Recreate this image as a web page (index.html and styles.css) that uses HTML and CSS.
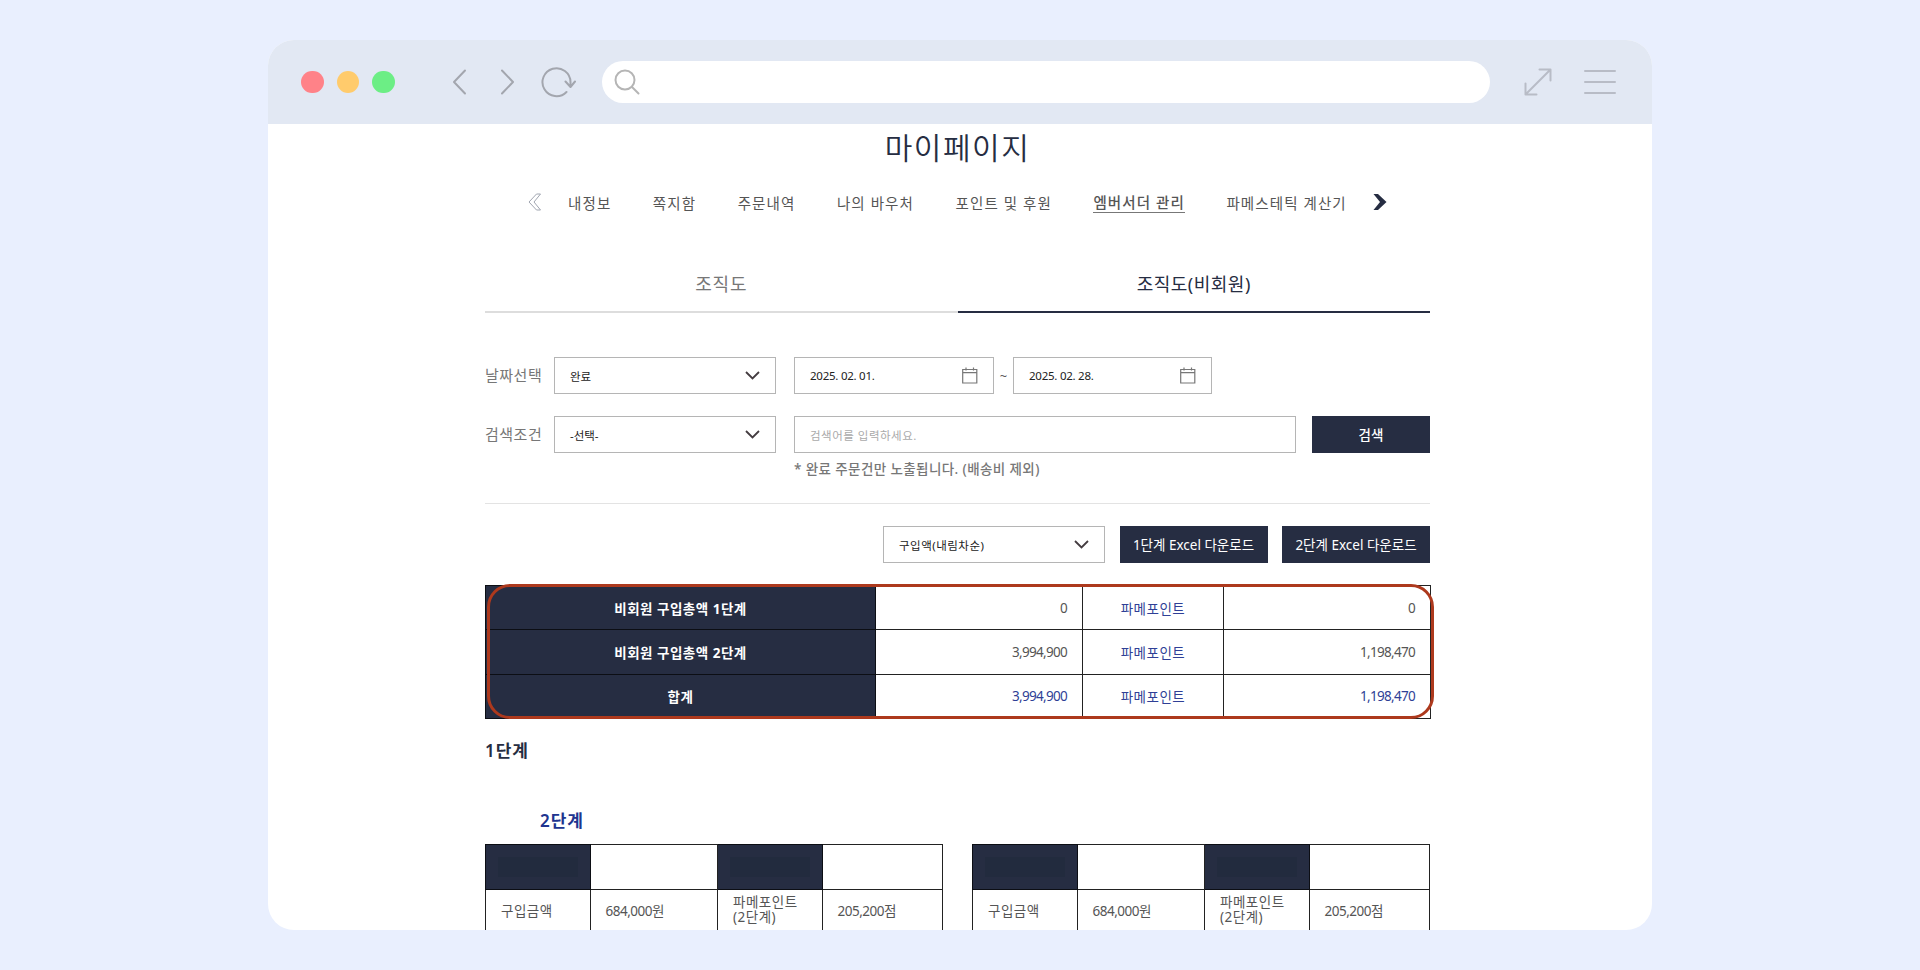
FILE: index.html
```html
<!DOCTYPE html>
<html lang="ko">
<head>
    <meta charset="UTF-8">
    <meta name="viewport" content="width=device-width, initial-scale=1.0">
    <title>마이페이지</title>
    <link rel="stylesheet" href="styles.css">
</head>
<body>
    <div class="browser">
        <header class="toolbar">
            <span class="dot red"></span>
            <span class="dot yellow"></span>
            <span class="dot green"></span>
            <svg class="icon-back" width="15" height="26" viewBox="0 0 15 26"><path d="M13 1.5 2 13l11 11.5"/></svg>
            <svg class="icon-next" width="15" height="26" viewBox="0 0 15 26"><path d="M2 1.5 13 13 2 24.5"/></svg>
            <svg class="icon-reload" width="36" height="32" viewBox="0 0 36 32"><path d="M25.5 26A14 14 0 1 1 29.5 16v4M24.5 15.5l5 5.5 4.5-5.5"/></svg>
            <div class="address">
                <svg width="26" height="26" viewBox="0 0 26 26"><circle cx="11" cy="11" r="9.5"/><path d="m18 18 6.5 6.5"/></svg>
            </div>
            <svg class="icon-expand" width="28" height="28" viewBox="0 0 28 28"><path d="M2 26 26 2M15.5 1.5h11v11M1.5 15.5v11h11"/></svg>
            <svg class="icon-menu" width="32" height="26" viewBox="0 0 32 26"><path d="M1 2h30M1 13h30M1 24h30"/></svg>
        </header>

        <main class="page">
            <h1>마이페이지</h1>
            <nav>
                <svg class="nav-prev" width="14" height="18" viewBox="0 0 14 18"><path d="M1 9 8.5 1h4L6 9l6.5 8h-4z"/></svg>
                <a>내정보</a>
                <a>쪽지함</a>
                <a>주문내역</a>
                <a>나의 바우처</a>
                <a>포인트 및 후원</a>
                <a class="active">엠버서더 관리</a>
                <a>파메스테틱 계산기</a>
                <svg class="nav-next" width="14" height="18" viewBox="0 0 14 18"><path d="M13.5 9 5 1H.5L7 9l-6.500 8H5z"/></svg>
            </nav>

            <div class="tabs">
                <a>조직도</a>
                <a class="active">조직도(비회원)</a>
            </div>

            <div class="row">
                <span class="label">날짜선택</span>
                <div class="box select"><span>완료</span><svg width="15" height="9" viewBox="0 0 15 9"><path d="m1 1 6.5 6.500L14 1"/></svg></div>
                <div class="box date"><span>2025. 02. 01.</span><svg width="16" height="17" viewBox="0 0 16 17"><path d="M.7 2.5h14.1V16H.7zM.7 5.6h14.1M4 .5v3M11.5.5v3"/></svg></div>
                <span class="tilde">~</span>
                <div class="box date second"><span>2025. 02. 28.</span><svg width="16" height="17" viewBox="0 0 16 17"><path d="M.7 2.5h14.1V16H.7zM.7 5.6h14.1M4 .5v3M11.5.5v3"/></svg></div>
            </div>
            <div class="row">
                <span class="label">검색조건</span>
                <div class="box select"><span>-선택-</span><svg width="15" height="9" viewBox="0 0 15 9"><path d="m1 1 6.5 6.500L14 1"/></svg></div>
                <div class="box keyword"><span>검색어를 입력하세요.</span></div>
                <button class="btn search">검색</button>
            </div>
            <p class="note">* 완료 주문건만 노출됩니다. (배송비 제외)</p>

            <div class="row actions">
                <div class="box select sort"><span>구입액(내림차순)</span><svg width="15" height="9" viewBox="0 0 15 9"><path d="m1 1 6.5 6.500L14 1"/></svg></div>
                <button class="btn">1단계 Excel 다운로드</button>
                <button class="btn">2단계 Excel 다운로드</button>
            </div>

            <div class="summary">
                <table>
                    <colgroup><col class="c1"><col class="c2"><col class="c3"><col class="c4"></colgroup>
                    <tr>
                        <th>비회원 구입총액 1단계</th>
                        <td class="num">0</td>
                        <td class="point">파메포인트</td>
                        <td class="num">0</td>
                    </tr>
                    <tr>
                        <th>비회원 구입총액 2단계</th>
                        <td class="num">3,994,900</td>
                        <td class="point">파메포인트</td>
                        <td class="num">1,198,470</td>
                    </tr>
                    <tr>
                        <th>합계</th>
                        <td class="num blue">3,994,900</td>
                        <td class="point">파메포인트</td>
                        <td class="num blue">1,198,470</td>
                    </tr>
                </table>
                <!-- highlight over the totals -->
                <div class="highlight"></div>
            </div>

            <h2>1단계</h2>
            <h3>2단계</h3>

            <div class="members">
                <table>
                    <colgroup><col class="m1"><col class="m2"><col class="m3"><col class="m4"></colgroup>
                    <tr>
                        <th><span class="mask"></span></th>
                        <td></td>
                        <th><span class="mask"></span></th>
                        <td></td>
                    </tr>
                    <tr>
                        <td class="name">구입금액</td>
                        <td>684,000원</td>
                        <td class="name two">파메포인트<br>(2단계)</td>
                        <td>205,200점</td>
                    </tr>
                </table>
                <table>
                    <colgroup><col class="m1"><col class="m2"><col class="m3"><col class="m4"></colgroup>
                    <tr>
                        <th><span class="mask"></span></th>
                        <td></td>
                        <th><span class="mask"></span></th>
                        <td></td>
                    </tr>
                    <tr>
                        <td class="name">구입금액</td>
                        <td>684,000원</td>
                        <td class="name two">파메포인트<br>(2단계)</td>
                        <td>205,200점</td>
                    </tr>
                </table>
            </div>
        </main>
    </div>
</body>
</html>
```
FILE: styles.css
```css
/* Global Styles */
* {
    box-sizing: border-box;
}
body {
    font-family: "Noto Sans", "Noto Sans CJK KR", sans-serif;
    background-color: #e9effe;
    color: #555;
    margin: 0;
    padding: 40px 268px;
    height: 970px;
    overflow: hidden;
}
svg {
    fill: none;
    flex: none;
}
.browser {
    width: 1384px;
    height: 890px;
    background-color: #fff;
    border-radius: 26px;
    overflow: hidden;
}

/* Browser bar */
.toolbar {
    display: flex;
    align-items: center;
    height: 84px;
    padding: 0 36px 0 33px;
    background-color: #e2e8f3;
}
.toolbar svg {
    stroke: #a3a6ae;
    stroke-width: 2;
    stroke-linecap: round;
    stroke-linejoin: round;
}
.dot {
    width: 22.5px;
    height: 22.5px;
    border-radius: 50%;
    margin-right: 13.2px;
}
.red {
    background-color: #ff8288;
}
.yellow {
    background-color: #ffcb6c;
}
.green {
    background-color: #6cee85;
}
.icon-back {
    margin-left: 44px;
}
.icon-next {
    margin-left: 33px;
}
.icon-reload {
    margin-left: 25.5px;
}
.address {
    display: flex;
    align-items: center;
    width: 888px;
    height: 42px;
    margin-left: 25px;
    padding-left: 12px;
    background-color: #fff;
    border-radius: 21px;
}
.toolbar .address svg {
    stroke: #b5b5b5;
}
.toolbar .icon-expand {
    margin-left: 34px;
    stroke: #b8bcc6;
}
.toolbar .icon-menu {
    margin-left: auto;
    stroke: #b8bcc6;
}

/* Page */
.page {
    width: 945px;
    margin-left: 217px;
}
h1 {
    height: 46px;
    line-height: 47px;
    margin: 0;
    font-size: 30px;
    font-weight: 350;
    letter-spacing: 1.5px;
    text-align: center;
    color: #262d42;
}
nav {
    display: flex;
    align-items: center;
    height: 64px;
    padding-left: 43px;
    font-size: 14.5px;
    letter-spacing: 1.1px;
    white-space: nowrap;
}
nav a {
    margin-right: 41.5px;
}
nav .active {
    font-weight: 500;
    line-height: 20px;
    border-bottom: 1px solid #777;
}
.nav-prev {
    margin-right: 26px;
    stroke: #a0a5b0;
}
.nav-next {
    margin-left: -15px;
    fill: #262d42;
}
.tabs {
    display: flex;
    height: 64px;
    margin-top: 15px;
    font-size: 18px;
    letter-spacing: 0.7px;
    line-height: 70px;
    text-align: center;
}
.tabs a {
    flex: 1;
    color: #777;
    border-bottom: 2px solid #ddd;
}
.tabs .active {
    color: #262d42;
    letter-spacing: 0.5px;
    border-color: #262d42;
}
.row {
    display: flex;
    align-items: center;
    height: 37px;
    margin-top: 22px;
}
.tabs + .row {
    margin-top: 44px;
}
.label {
    width: 69px;
    padding-bottom: 2px;
    font-size: 15px;
    letter-spacing: 0.5px;
    color: #777;
}
.box {
    display: flex;
    align-items: center;
    justify-content: space-between;
    height: 37px;
    padding: 0 15px;
    border: 1px solid #b5b5b5;
    font-size: 11.5px;
    color: #222;
}
.box svg {
    stroke: #443c40;
    stroke-width: 1.8;
}
.select {
    width: 222px;
}
.sort {
    letter-spacing: 0.5px;
}
.date {
    width: 200px;
    margin-left: 18px;
    letter-spacing: -0.25px;
}
.date svg {
    stroke: #777;
    stroke-width: 1.2;
}
.date.second {
    width: 199px;
    margin-left: 0;
}
.tilde {
    width: 19px;
    font-size: 13px;
    text-align: center;
}
.keyword {
    width: 502px;
    margin-left: 18px;
    letter-spacing: 0.5px;
    color: #aaa;
}
.btn {
    width: 148px;
    height: 37px;
    padding: 0 0 2px;
    border: none;
    background-color: #262d42;
    color: #fff;
    font-family: inherit;
    font-size: 13.5px;
    white-space: nowrap;
}
.search {
    width: 118px;
    margin-left: auto;
    font-weight: 500;
}
.note {
    height: 32px;
    line-height: 32px;
    margin: 0 0 0 309px;
    font-size: 13.5px;
    font-weight: 500;
    letter-spacing: 0.4px;
    color: #777;
}
.actions {
    height: 60px;
    margin-top: 18px;
    padding-top: 22px;
    justify-content: flex-end;
    gap: 14.5px;
    border-top: 1px solid #e3e3e3;
}

/* Tables */
table {
    border-collapse: collapse;
    table-layout: fixed;
    font-size: 13.5px;
}
th, td {
    height: 44.4px;
    border: 1px solid #222;
    padding: 0 15px;
}
th {
    background-color: #262d42;
    border-color: #0c0e14;
    color: #fff;
    font-weight: 700;
    letter-spacing: 0.5px;
}
.summary {
    position: relative;
    margin-top: 22px;
}
.summary table {
    width: 945px;
}
.c1 {
    width: 390px;
}
.c2, .c4 {
    width: 207px;
}
.c3 {
    width: 141px;
}
.num {
    text-align: right;
    letter-spacing: -0.7px;
}
.point {
    text-align: center;
    letter-spacing: 0.5px;
}
.point, .blue {
    color: #2f3f96;
}
.highlight {
    position: absolute;
    top: -1px;
    left: 2px;
    width: 947px;
    height: 135px;
    border: 3px solid #ad391d;
    border-radius: 23px;
}
h2, h3 {
    height: 70px;
    line-height: 70px;
    margin: 0;
    font-size: 17px;
    font-weight: 600;
    letter-spacing: 1px;
    color: #262d42;
}
h2 {
    margin-top: -3px;
}
h3 {
    height: 58px;
    padding-left: 55px;
    color: #20348f;
}
.members {
    display: flex;
    justify-content: space-between;
}
.members table {
    width: 458px;
}
.m1, .m3 {
    width: 104.5px;
}
.m2 {
    width: 127.5px;
}
.m4 {
    width: 120.5px;
}
.members th {
    padding: 0;
}
.members td {
    padding-bottom: 2px;
    letter-spacing: -0.5px;
}
.members td.name {
    padding-right: 0;
    letter-spacing: 0.5px;
}
.members td.two {
    line-height: 15px;
}
.mask {
    display: block;
    width: 80px;
    height: 20px;
    margin: 0 auto;
    background-color: #222b3e;
}
```
